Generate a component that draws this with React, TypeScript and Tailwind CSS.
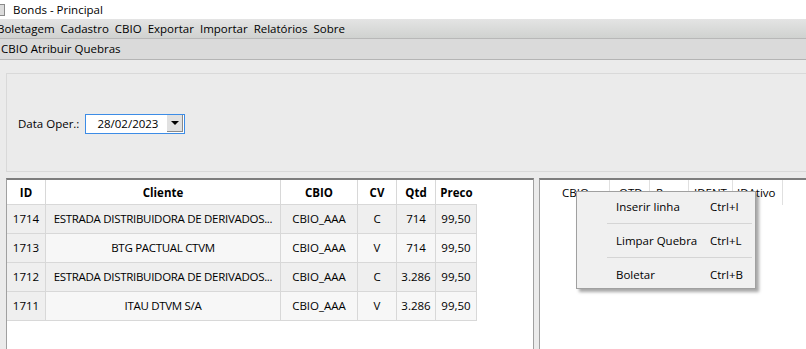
import React from 'react';

// rows for the quebra grid on the left
interface Quebra {
  id: number;
  cliente: string;
  cbio: string;
  cv: string;
  qtd: string;
  preco: string;
}

// the grid cuts long names itself, so the text is kept as it is shown
const rows: Quebra[] = [
  { id: 1714, cliente: 'ESTRADA DISTRIBUIDORA DE DERIVADOS...', cbio: 'CBIO_AAA', cv: 'C', qtd: '714', preco: '99,50' },
  { id: 1713, cliente: 'BTG PACTUAL CTVM', cbio: 'CBIO_AAA', cv: 'V', qtd: '714', preco: '99,50' },
  { id: 1712, cliente: 'ESTRADA DISTRIBUIDORA DE DERIVADOS...', cbio: 'CBIO_AAA', cv: 'C', qtd: '3.286', preco: '99,50' },
  { id: 1711, cliente: 'ITAU DTVM S/A', cbio: 'CBIO_AAA', cv: 'V', qtd: '3.286', preco: '99,50' },
];

const menus = ['Boletagem', 'Cadastro', 'CBIO', 'Exportar', 'Importar', 'Relatórios', 'Sobre'];

const menuItems = [
  { label: 'Inserir linha', shortcut: 'Ctrl+I' },
  { label: 'Limpar Quebra', shortcut: 'Ctrl+L' },
  { label: 'Boletar', shortcut: 'Ctrl+B' },
];

const cell = 'border-t border-r border-b border-[#d8d8d8] flex items-center justify-center';

export default function App() {
  return (
    <div
      className="relative w-[806px] h-[349px] overflow-hidden bg-[#ebebeb] text-[11.5px] text-black"
      style={{ fontFamily: '"Segoe UI", "Open Sans", "Noto Sans", sans-serif' }}
    >
      {/* window title */}
      <div className="h-[19px] bg-white flex items-center">
        <div className="w-[6px] h-[12px] ml-[-1px] border border-[#8a8a8a] bg-[#dcdcdc]" />
        <span className="ml-[8px]">Bonds - Principal</span>
      </div>

      {/* menu bar */}
      <div className="h-[20px] bg-gradient-to-b from-[#e4e4e4] to-[#d0d2d0] border-b border-[#b8b8b8] flex items-center ml-[-3px] gap-[6px]">
        {menus.map((m) => (
          <span key={m}>{m}</span>
        ))}
      </div>

      {/* open form tab */}
      <div className="h-[21px] bg-[#dadada] border-b border-[#b4b4b4] flex items-center pl-[1px]">
        CBIO Atribuir Quebras
      </div>

      {/* filter group */}
      <div className="mt-[13px] ml-[6px] mr-[-4px] h-[99px] border border-[#d9d9d9] flex items-center pl-[11px] pt-[2px]">
        <span>Data Oper.:</span>
        <div className="ml-[6px] w-[100px] h-[20px] border border-[#3c8ce6] bg-white flex items-center">
          <span className="ml-[11px]">28/02/2023</span>
          <div className="ml-auto mr-[1px] w-[16px] h-[17px] bg-[#e1e1e1] border-r border-b border-[#8a8a8a] flex items-center justify-center">
            <div className="w-0 h-0 border-l-[4px] border-r-[4px] border-t-[4px] border-l-transparent border-r-transparent border-t-black" />
          </div>
        </div>
      </div>

      {/* grids */}
      <div className="mt-[6px] flex gap-[5px] pl-[6px]">
        <div className="w-[528px] h-[200px] border-l border-t-2 border-r border-[#a0a0a0] border-t-[#7d7d7d] bg-white">
          <div className="w-[470px]">
            <div className="flex h-[25px] font-bold">
              <div className="w-[39px] flex items-center justify-center border-r border-[#d8d8d8]">ID</div>
              <div className="w-[235px] flex items-center justify-center border-r border-[#d8d8d8]">Cliente</div>
              <div className="w-[77px] flex items-center justify-center border-r border-[#d8d8d8]">CBIO</div>
              <div className="w-[39px] flex items-center justify-center border-r border-[#d8d8d8]">CV</div>
              <div className="w-[39px] flex items-center justify-center border-r border-[#d8d8d8]">Qtd</div>
              <div className="w-[41px] flex items-center justify-center">Preco</div>
            </div>
            {rows.map((r, i) => (
              <div key={r.id} className={`flex h-[30px] -mt-px first:mt-0 ${i % 2 === 0 ? 'bg-[#efefef]' : 'bg-[#f7f7f7]'}`}>
                <div className={`w-[39px] bg-[#efefef] ${cell}`}>{r.id}</div>
                <div className={`w-[235px] ${cell}`}>
                  <span className="whitespace-nowrap tracking-[-0.3px]">{r.cliente}</span>
                </div>
                <div className={`w-[77px] ${cell}`}>{r.cbio}</div>
                <div className={`w-[39px] ${cell}`}>{r.cv}</div>
                <div className={`w-[39px] ${cell}`}>{r.qtd}</div>
                <div className={`w-[41px] ${cell}`}>{r.preco}</div>
              </div>
            ))}
          </div>
        </div>

        <div className="flex-1 mr-[-10px] h-[200px] border-l border-t-2 border-[#a0a0a0] border-t-[#7d7d7d] bg-white">
          <div className="flex h-[25px]">
            <div className="w-[70px] pl-[22px] flex items-center border-r border-[#e0e0e0]">CBIO</div>
            <div className="w-[40px] pl-[9px] flex items-center border-r border-[#e0e0e0]">QTD</div>
            <div className="w-[39px] pl-[6px] flex items-center border-r border-[#e0e0e0]">P</div>
            <div className="w-[44px] pl-[5px] flex items-center border-r border-[#e0e0e0]">IDENT</div>
            <div className="w-[50px] pl-[4px] flex items-center border-r border-[#e0e0e0]">IDAtivo</div>
          </div>
        </div>
      </div>

      {/* context menu */}
      <div className="absolute left-[576px] top-[191px] w-[180px] h-[98px] bg-[#f0f0f0] border border-[#a0a0a0] shadow-[3px_3px_3px_rgba(0,0,0,0.35)] flex flex-col pt-[3px]">
        {menuItems.map((item, i) => (
          <React.Fragment key={item.label}>
            {i > 0 && <div className="ml-[30px] mr-[3px] h-px bg-[#d5d5d5] my-[5px]" />}
            <div className="flex items-center h-[23px]">
              <span className="ml-[39px] w-[94px]">{item.label}</span>
              <span>{item.shortcut}</span>
            </div>
          </React.Fragment>
        ))}
      </div>
    </div>
  );
}
